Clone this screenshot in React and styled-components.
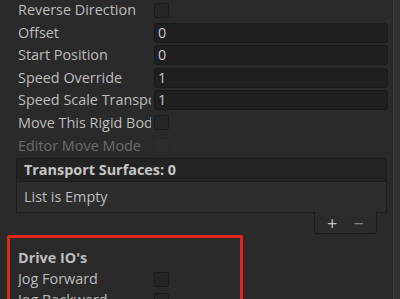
import React from 'react'
import { styled, createGlobalStyle } from 'styled-components';

const Global = createGlobalStyle`
  html, body {
    margin: 0;
    padding: 0;
    background: #2a2a2a;
    overflow: hidden;
  }
`;

const Page = styled.div`
  position: relative;
  width: 400px;
  height: 299px;
  background: #2a2a2a;
  font-family: "Open Sans", "Noto Sans", sans-serif;
  font-size: 14.4px;
  color: #bdbdbd;
  overflow: hidden;
`;

const Scrollbar = styled.div`
  position: absolute;
  top: 0;
  right: 0;
  width: 6px;
  height: 100%;
  background: #313131;
  border-left: 1px solid #3b3b3b;
`;

const Fields = styled.div`
  display: flex;
  flex-direction: column;
  gap: ${p => p.$gap || 2.6}px;
  width: 388px;
`;

const Row = styled.div`
  display: flex;
  align-items: center;
  height: 20px;
  padding-left: ${p => p.$indent || 18}px;
`;

const Label = styled.div`
  width: 133px;
  margin-right: 3px;
  flex: none;
  white-space: nowrap;
  overflow: hidden;
  line-height: 20px;
  color: ${p => (p.$dim ? '#6c6c6c' : '#bdbdbd')};
  font-weight: ${p => (p.$bold ? 700 : 400)};
`;

const Check = styled.div`
  width: 13px;
  height: 13px;
  border: 1px solid ${p => (p.$dim ? '#272727' : '#1b1b1b')};
  border-radius: 2px;
  background: ${p => (p.$dim ? '#2d2d2d' : '#262626')};
`;

const Input = styled.div`
  flex: 1;
  height: 18px;
  border: 1px solid #191919;
  border-radius: 3px;
  background: #1f1f1f;
  color: #c8c8c8;
  padding-left: 3px;
  line-height: 18px;
  font-size: 14.4px;
`;

const List = styled.div`
  margin: 2.5px 0 0 16px;
  width: 371px;
`;

const ListHeader = styled.div`
  height: 22px;
  border: 1px solid #1c1c1c;
  border-radius: 3px 3px 0 0;
  background: #232323;
  padding-left: 7px;
  line-height: 22px;
  font-weight: 700;
  color: #c6c6c6;
`;

const ListBody = styled.div`
  height: 30px;
  border: 1px solid #1c1c1c;
  border-top: none;
  background: #2d2d2d;
  padding-left: 7px;
  line-height: 30px;
`;

const Footer = styled.div`
  display: flex;
  align-items: center;
  justify-content: space-around;
  margin: -1px 10px 0 auto;
  width: 63px;
  height: 22px;
  border: 1px solid #1c1c1c;
  border-top: none;
  border-radius: 0 0 3px 3px;
  background: #2b2b2b;
  padding: 0 4px 0 4px;
  box-sizing: border-box;
`;

const Sign = styled.span`
  font-size: 18px;
  line-height: 20px;
  color: ${p => (p.$dim ? '#858585' : '#c4c4c4')};
`;

const Highlight = styled.div`
  margin: 1px 0 0 7px;
  width: 230px;
  height: 80px;
  border: 3px solid #e2261d;
  border-radius: 2px;
  padding-top: 10px;
`;

const App = () => {
  return (
    <Page>
      <Global />
      <Fields>
        <Row><Label>Reverse Direction</Label><Check /></Row>
        <Row><Label>Offset</Label><Input>0</Input></Row>
        <Row><Label>Start Position</Label><Input>0</Input></Row>
        <Row><Label>Speed Override</Label><Input>1</Input></Row>
        <Row><Label>Speed Scale Transport</Label><Input>1</Input></Row>
        <Row><Label>Move This Rigid Body</Label><Check /></Row>
        <Row><Label $dim>Editor Move Mode</Label><Check $dim /></Row>
      </Fields>
      <List>
        <ListHeader>Transport Surfaces: 0</ListHeader>
        <ListBody>List is Empty</ListBody>
        <Footer>
          <Sign>+</Sign>
          <Sign $dim>−</Sign>
        </Footer>
      </List>
      <Highlight>
        <Fields $gap={1}>
          <Row $indent={8}><Label $bold>Drive IO's</Label></Row>
          <Row $indent={8}><Label>Jog Forward</Label><Check /></Row>
          <Row $indent={8}><Label>Jog Backward</Label><Check /></Row>
        </Fields>
      </Highlight>
      <Scrollbar />
    </Page>
  )
}

export default App
